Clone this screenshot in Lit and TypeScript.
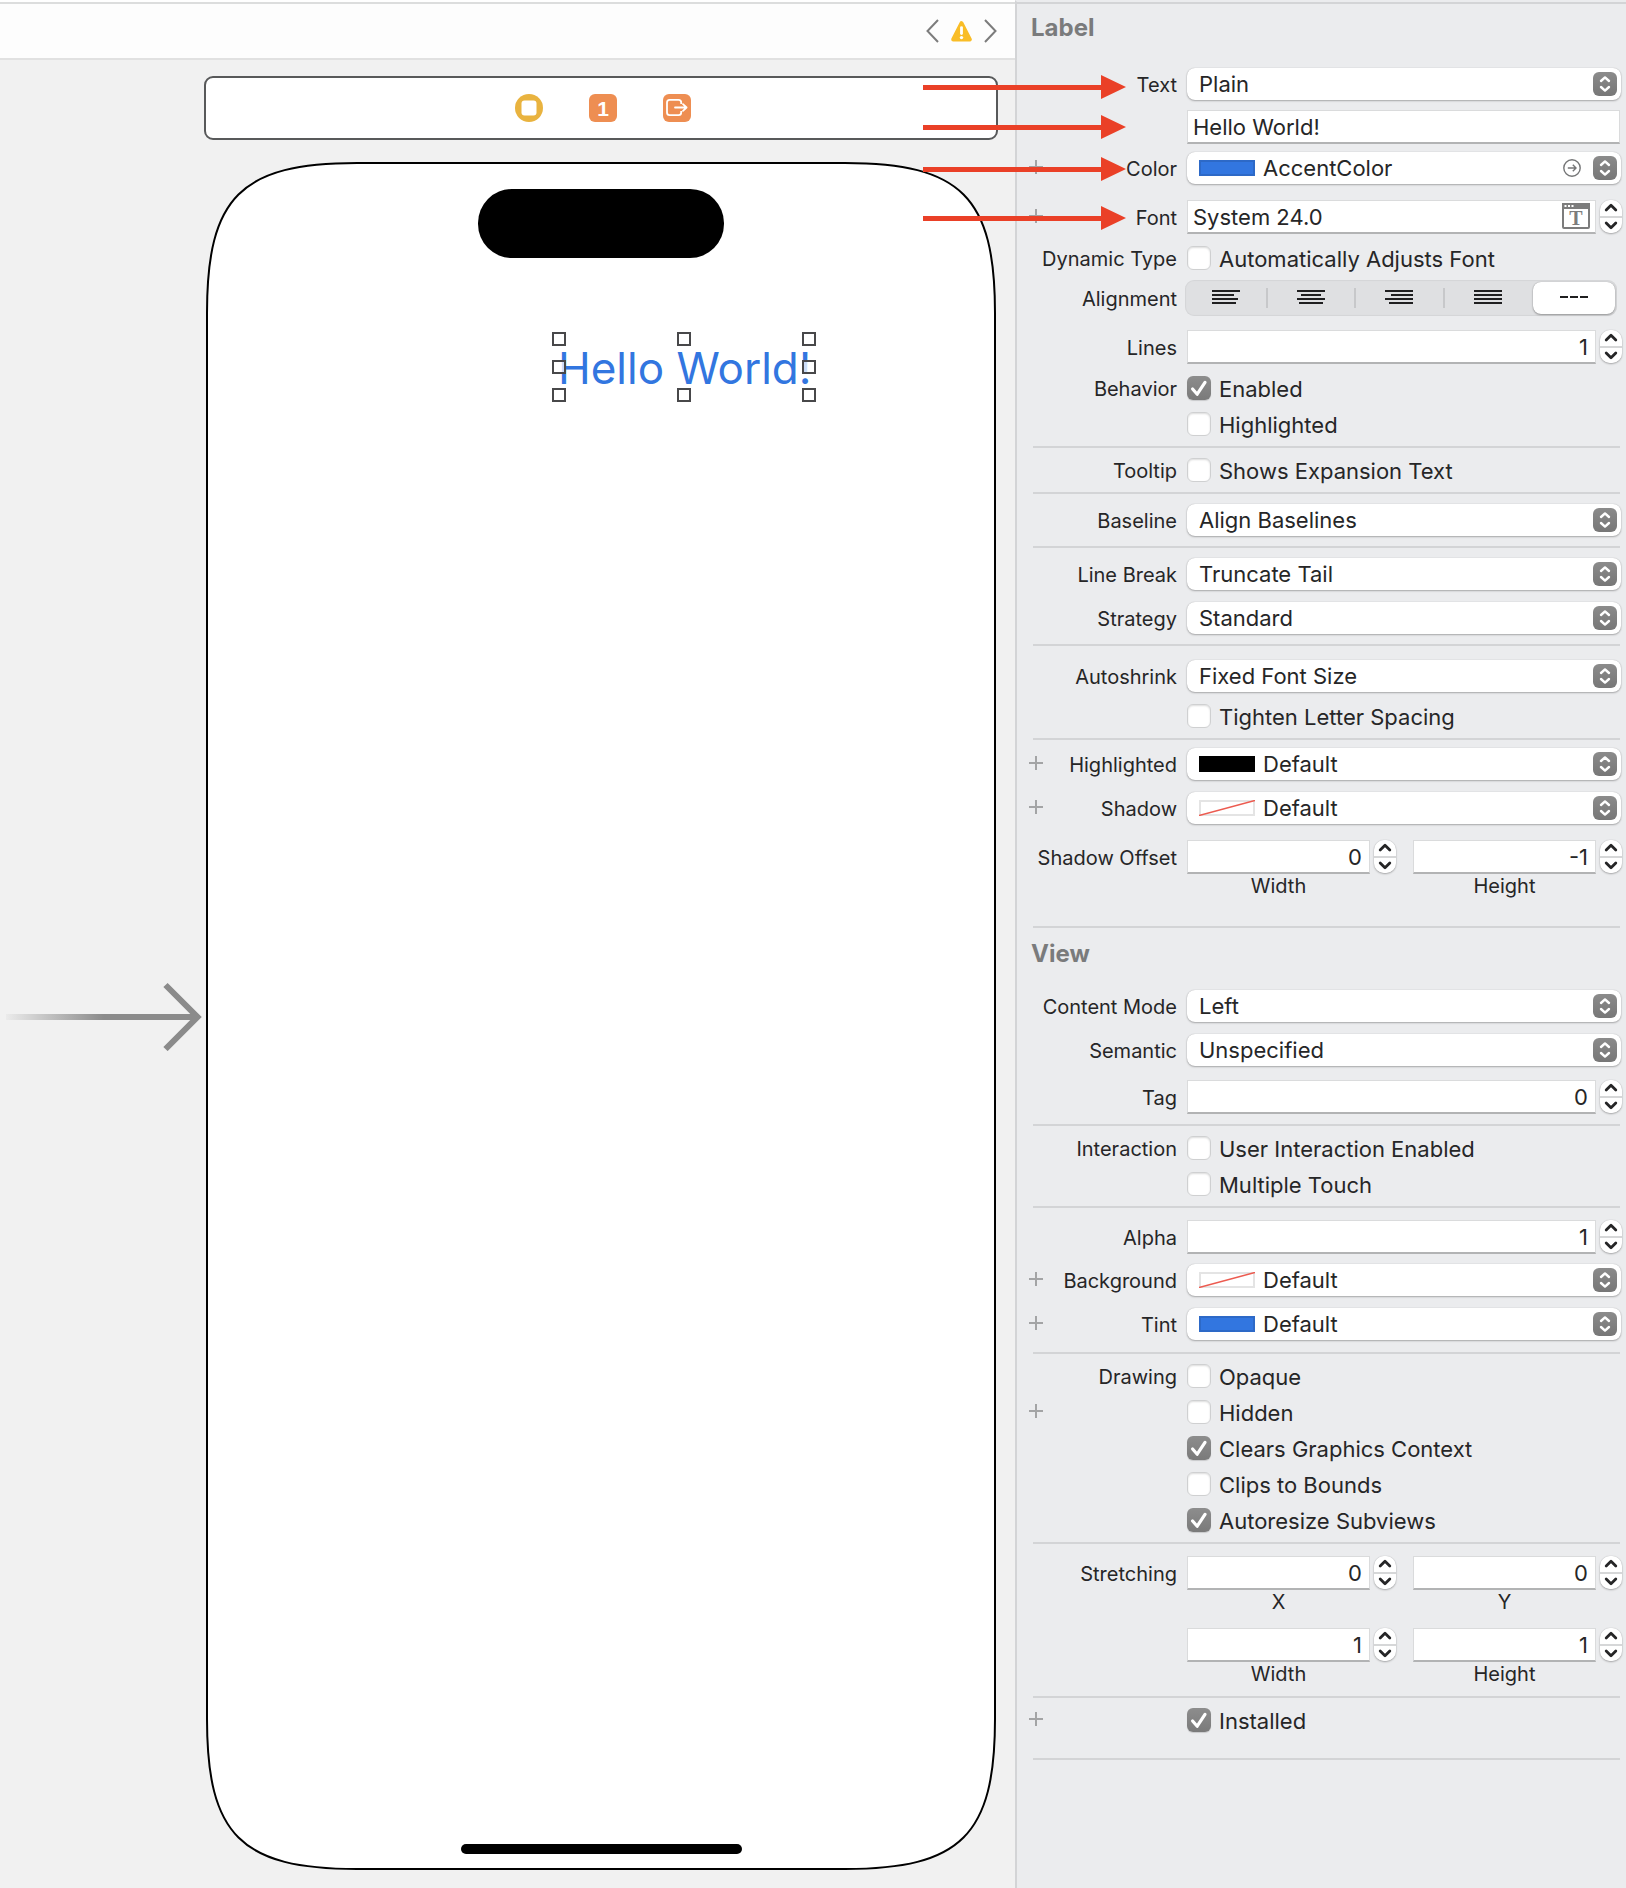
import { LitElement, html, css, svg, nothing, type TemplateResult } from "lit";
import { customElement } from "lit/decorators.js";
import { classMap } from "lit/directives/class-map.js";

type Gap = 8 | 10 | 12 | 14 | 16 | 20 | 24;

interface RowOptions {
  label?: string;
  forId?: string;
  plus?: boolean;
  gap?: Gap;
  top?: boolean;
}

const ALIGNMENTS: { name: string; lines: [number, number][] }[] = [
  { name: "Left", lines: [[0, 28], [0, 22], [0, 26], [0, 24]] },
  { name: "Center", lines: [[0, 28], [4, 20], [0, 28], [2, 24]] },
  { name: "Right", lines: [[0, 28], [6, 22], [0, 28], [4, 24]] },
  { name: "Justified", lines: [[0, 28], [0, 28], [0, 28], [0, 28]] },
];

/* A rectangle whose corners bend gradually: `reach` is where a bend starts, `pull` its control distance. */
function continuousRect(x0: number, y0: number, x1: number, y1: number, reach: number, pull: number): string {
  return [
    `M${x0 + reach} ${y0}H${x1 - reach}`,
    `C${x1 - pull} ${y0} ${x1} ${y0 + pull} ${x1} ${y0 + reach}`,
    `V${y1 - reach}`,
    `C${x1} ${y1 - pull} ${x1 - pull} ${y1} ${x1 - reach} ${y1}`,
    `H${x0 + reach}`,
    `C${x0 + pull} ${y1} ${x0} ${y1 - pull} ${x0} ${y1 - reach}`,
    `V${y0 + reach}`,
    `C${x0} ${y0 + pull} ${x0 + pull} ${y0} ${x0 + reach} ${y0}Z`,
  ].join("");
}

@customElement("app-root")
export class AppRoot extends LitElement {
  static styles = css`
    :host {
      display: block;
      min-height: 100vh;
      font-family: Inter, "Liberation Sans", sans-serif;
      color: #262627;
      background: #ebecee;
    }
    * {
      box-sizing: border-box;
    }
    .app {
      display: grid;
      grid-template-columns: minmax(0, 1fr) 611px;
      min-height: 100vh;
      position: relative;
    }

    .editor {
      display: flex;
      flex-direction: column;
      background: #f1f1f1;
      border-top: 2px solid #ffffff;
    }
    .jumpbar {
      display: flex;
      justify-content: flex-end;
      align-items: center;
      gap: 12px;
      height: 58px;
      padding: 0 18px 0 0;
      background: #fdfdfd;
      border-top: 2px solid #dcdddd;
      border-bottom: 2px solid #e1e1e1;
    }
    .icon-button {
      display: block;
      padding: 0;
      border: 0;
      background: none;
    }
    svg {
      display: block;
    }
    .canvas {
      display: grid;
      grid-template-columns: 204px minmax(0, 1fr);
      row-gap: 22px;
      padding: 16px 17px 18px 0;
    }
    .dock {
      grid-column: 2;
      display: flex;
      justify-content: center;
      align-items: center;
      gap: 46px;
      height: 64px;
      padding-left: 4px;
      border: 2px solid #58595a;
      border-radius: 9px;
      background: #ffffff;
    }
    .entry {
      grid-column: 1;
      align-self: center;
      padding-left: 6px;
    }
    .phone {
      grid-column: 2;
      position: relative;
      display: flex;
      flex-direction: column;
      align-items: center;
      margin: 0 2px;
      padding: 27px 0 16px;
      aspect-ratio: 790 / 1708;
    }
    .outline {
      position: absolute;
      inset: 0;
      width: 100%;
      height: 100%;
    }
    .island {
      position: relative;
      width: 246px;
      height: 69px;
      border-radius: 34px;
      background: #000000;
    }
    .home {
      position: relative;
      width: 281px;
      height: 10px;
      margin-top: auto;
      border-radius: 5px;
      background: #000000;
    }
    .selection {
      position: absolute;
      left: 346px;
      top: 170px;
      display: grid;
      grid-template-columns: repeat(3, auto);
      justify-content: space-between;
      align-content: space-between;
      width: 264px;
      height: 70px;
    }
    .selected-text {
      position: absolute;
      left: 6px;
      top: 8px;
      font-size: 44px;
      line-height: 56px;
      white-space: nowrap;
      color: #3276e0;
    }
    .handle {
      position: relative;
      width: 14px;
      height: 14px;
      border: 2px solid #48484a;
      background: rgba(255, 255, 255, 0.75);
    }
    .handle.blank {
      visibility: hidden;
    }

    .inspector {
      border-left: 2px solid #d3d4d6;
      border-top: 2px solid #ebecee;
    }
    .inspector-body {
      padding: 8px 4px 0 12px;
      border-top: 2px solid #d3d4d6;
    }
    .title {
      margin: 0 0 0 2px;
      font-size: 24px;
      line-height: 32px;
      font-weight: 700;
      color: #7a7b7c;
    }
    .rule {
      height: 2px;
      margin: 10px 2px 0 4px;
      border: 0;
      background: #d3d4d6;
    }
    .rule.far {
      margin-top: 26px;
    }
    .g8 { margin-top: 8px; }
    .g10 { margin-top: 10px; }
    .g12 { margin-top: 12px; }
    .g14 { margin-top: 14px; }
    .g16 { margin-top: 16px; }
    .g20 { margin-top: 20px; }
    .g24 { margin-top: 24px; }
    .row {
      display: grid;
      grid-template-columns: 148px minmax(0, 1fr);
      column-gap: 10px;
      align-items: center;
    }
    .row.top {
      align-items: start;
    }
    .name {
      display: flex;
      align-items: center;
      justify-content: flex-end;
      font-size: 20px;
      line-height: 22px;
      white-space: nowrap;
    }
    .name-text {
      padding-top: 2px;
    }
    .row.top .name {
      line-height: 32px;
    }
    .plus {
      margin-right: auto;
      margin-bottom: 2px;
    }

    .popup {
      position: relative;
      margin-right: 1px;
    }
    .popup select {
      display: block;
      width: 100%;
      height: 32px;
      padding: 0 40px 0 12px;
      border: 0;
      border-radius: 8px;
      appearance: none;
      background: #ffffff;
      box-shadow: 0 0 1px rgba(0, 0, 0, 0.25), 0 1px 2px rgba(0, 0, 0, 0.28);
      font: inherit;
      font-size: 22px;
      color: inherit;
    }
    .popup.has-swatch select {
      padding-left: 76px;
    }
    .popup-arrows {
      position: absolute;
      right: 4px;
      top: 4px;
      pointer-events: none;
    }
    .swatch {
      position: absolute;
      left: 12px;
      top: 8px;
      width: 56px;
      height: 16px;
      pointer-events: none;
    }
    .swatch.blue {
      background: #3276e0;
      border: 2px solid #2d69c7;
    }
    .swatch.black {
      background: #000000;
    }
    .goto {
      position: absolute;
      right: 40px;
      top: 7px;
    }

    .field {
      display: block;
      width: 100%;
      min-width: 0;
      height: 34px;
      padding: 0 7px 0 5px;
      border: 1px solid #dadbdc;
      border-bottom: 2px solid #b2b3b4;
      border-radius: 0;
      background: #ffffff;
      font: inherit;
      font-size: 22px;
      color: inherit;
    }
    .full {
      margin-right: 2px;
    }
    .field.number {
      text-align: right;
    }
    .with-stepper {
      position: relative;
      display: grid;
      grid-template-columns: minmax(0, 1fr) 22px;
      column-gap: 4px;
    }
    .font-picker {
      position: absolute;
      right: 32px;
      top: 3px;
    }
    .stepper {
      display: flex;
      flex-direction: column;
      gap: 2px;
      height: 33px;
      border-radius: 10px;
      overflow: hidden;
      background: #d6d7d8;
      box-shadow: 0 0 1px rgba(0, 0, 0, 0.25), 0 1px 2px rgba(0, 0, 0, 0.28);
    }
    .stepper button {
      flex: 1;
      display: flex;
      align-items: center;
      justify-content: center;
      padding: 0;
      border: 0;
      background: #ffffff;
    }
    .pair {
      display: grid;
      grid-template-columns: repeat(2, minmax(0, 1fr));
      column-gap: 17px;
    }
    .caption {
      display: block;
      padding: 0 26px 2px 0;
      text-align: center;
      font-size: 20px;
      line-height: 24px;
    }

    .check {
      display: flex;
      align-items: center;
      gap: 8px;
      height: 24px;
      font-size: 22px;
      line-height: 22px;
      white-space: nowrap;
    }
    .check-text {
      padding-top: 2px;
    }
    .box {
      position: relative;
      display: block;
      width: 24px;
      height: 24px;
    }
    .box input {
      display: block;
      width: 24px;
      height: 24px;
      margin: 0;
      appearance: none;
      border: 1px solid #cfd0d1;
      border-radius: 6px;
      background: #ffffff;
      box-shadow: inset 0 1px 2px rgba(0, 0, 0, 0.14);
    }
    .box input:checked {
      border: 0;
      background: linear-gradient(#8d8d8d, #7a7a7a);
      box-shadow: 0 1px 1px rgba(0, 0, 0, 0.15);
    }
    .tick {
      position: absolute;
      inset: 0;
      visibility: hidden;
      pointer-events: none;
    }
    .box input:checked + .tick {
      visibility: visible;
    }

    .segments {
      display: grid;
      grid-template-columns: 83fr 88fr 88fr 88fr 84fr;
      height: 36px;
      margin: 0 5px 0 -2px;
      border-radius: 9px;
      background: #dfe0e2;
      box-shadow: inset 0 0 1px 1px rgba(0, 0, 0, 0.05);
    }
    .segment {
      display: flex;
      align-items: center;
      justify-content: center;
      margin: 8px 0;
      padding: 0 0 2px;
      border: 0;
      border-right: 2px solid #c7c8ca;
      background: none;
    }
    .segment:nth-child(4) {
      border-right-color: transparent;
    }
    .segment.on {
      margin: 2px 2px 2px 0;
      border: 0;
      border-radius: 8px;
      background: #ffffff;
      box-shadow: 0 0 1px rgba(0, 0, 0, 0.35), 0 1px 2px rgba(0, 0, 0, 0.3);
    }

    .pointers {
      position: absolute;
      right: 500px;
      top: 75px;
      pointer-events: none;
    }
  `;

  private row(control: TemplateResult, options: RowOptions = {}) {
    const { label, forId, plus, gap = 12, top } = options;
    return html`<div class=${classMap({ row: true, top: !!top, [`g${gap}`]: true })}>
      <div class="name">
        ${plus
          ? html`<button class="icon-button plus" aria-label=${`Add variation ${label ?? ""}`}>
              <svg width="14" height="14" viewBox="0 0 14 14">
                <path d="M7 0V14M0 7H14" stroke="#a3a4a5" stroke-width="2" />
              </svg>
            </button>`
          : nothing}
        ${label
          ? forId
            ? html`<label class="name-text" for=${forId}>${label}</label>`
            : html`<span class="name-text">${label}</span>`
          : nothing}
      </div>
      ${control}
    </div>`;
  }

  private popup(label: string, value: string, options: RowOptions & { swatch?: "blue" | "black" | "none"; goto?: boolean } = {}) {
    const id = `popup-${label.toLowerCase().replace(/ /g, "-")}`;
    const { swatch } = options;
    return this.row(
      html`<div class=${classMap({ popup: true, "has-swatch": !!swatch })}>
        <select id=${id}>
          <option>${value}</option>
        </select>
        ${swatch === "none"
          ? html`<svg class="swatch" width="56" height="16" viewBox="0 0 56 16">
              <rect x="1" y="1" width="54" height="14" fill="#fff" stroke="#e4e4e4" stroke-width="2" />
              <path d="M0 15.6L56 0.4" stroke="#ec5b50" stroke-width="1.4" />
            </svg>`
          : swatch
            ? html`<span class="swatch ${swatch}"></span>`
            : nothing}
        ${options.goto
          ? html`<button class="icon-button goto" aria-label="Go to color">
              <svg width="18" height="18" viewBox="0 0 18 18" fill="none" stroke="#757677" stroke-width="1.4">
                <circle cx="9" cy="9" r="8.2" />
                <path d="M4.8 9H13M9.8 5.8L13 9L9.8 12.2" />
              </svg>
            </button>`
          : nothing}
        <svg class="popup-arrows" width="24" height="24" viewBox="0 0 24 24">
          <defs>
            <linearGradient id="arrows-fill" x1="0" y1="0" x2="0" y2="1">
              <stop offset="0" stop-color="#8b8b8b" />
              <stop offset="1" stop-color="#777777" />
            </linearGradient>
          </defs>
          <rect width="24" height="24" rx="6" fill="url(#arrows-fill)" />
          <path
            d="M8 9L12 5.4L16 9M8 15L12 18.6L16 15"
            fill="none"
            stroke="#fff"
            stroke-width="2.4"
            stroke-linecap="round"
            stroke-linejoin="round"
          />
        </svg>
      </div>`,
      { label, forId: id, ...options },
    );
  }

  private stepper(name: string) {
    const arrow = (d: string) => html`<svg width="14" height="9" viewBox="0 0 14 9">
      <path d=${d} fill="none" stroke="#262627" stroke-width="2.8" stroke-linecap="round" stroke-linejoin="round" />
    </svg>`;
    return html`<div class="stepper">
      <button aria-label=${`Increase ${name}`}>${arrow("M2.2 7L7 2.2L11.8 7")}</button>
      <button aria-label=${`Decrease ${name}`}>${arrow("M2.2 2L7 6.8L11.8 2")}</button>
    </div>`;
  }

  private numberInput(id: string, value: string, name: string) {
    return html`<div class="with-stepper">
      <input class="field number" id=${id} type="text" inputmode="numeric" .value=${value} />
      ${this.stepper(name)}
    </div>`;
  }

  private numberRow(label: string, value: string, gap: Gap) {
    const id = `number-${label.toLowerCase()}`;
    return this.row(this.numberInput(id, value, label), { label, forId: id, gap });
  }

  private pairRow(label: string | undefined, prefix: string, items: [string, string][], gap: Gap) {
    return this.row(
      html`<div class="pair">
        ${items.map(
          ([caption, value]) => html`<div>
            ${this.numberInput(`${prefix}-${caption}`, value, caption)}
            <label class="caption" for=${`${prefix}-${caption}`}>${caption}</label>
          </div>`,
        )}
      </div>`,
      { label, gap, top: true },
    );
  }

  private check(text: string, checked = false, options: RowOptions = {}) {
    return this.row(
      html`<label class="check">
        <span class="box">
          <input type="checkbox" .checked=${checked} />
          <svg class="tick" width="24" height="24" viewBox="0 0 24 24">
            <path
              d="M5.6 13L10.2 18.2L18 6.4"
              fill="none"
              stroke="#fff"
              stroke-width="3.2"
              stroke-linecap="round"
              stroke-linejoin="round"
            />
          </svg>
        </span>
        <span class="check-text">${text}</span>
      </label>`,
      options,
    );
  }

  private segments() {
    return this.row(
      html`<div class="segments" role="group" aria-label="Alignment">
        ${ALIGNMENTS.map(
          ({ name, lines }) => html`<button class="segment" aria-label=${name} aria-pressed="false">
            <svg width="28" height="14" viewBox="0 0 28 14">
              ${lines.map(([x, w], i) => svg`<rect x=${x} y=${i * 4} width=${w} height="2" fill="#1f1f20" />`)}
            </svg>
          </button>`,
        )}
        <button class="segment on" aria-label="Natural" aria-pressed="true">
          <svg width="28" height="2" viewBox="0 0 28 2">
            <path d="M0 1H8M10 1H18M20 1H28" stroke="#1f1f20" stroke-width="2" />
          </svg>
        </button>
      </div>`,
      { label: "Alignment", gap: 10 },
    );
  }

  private editor() {
    return html`<main class="editor">
      <nav class="jumpbar" aria-label="Issues">
        <button class="icon-button" aria-label="Previous issue">
          <svg width="13" height="24" viewBox="0 0 13 24">
            <path d="M12 1L1.5 12L12 23" fill="none" stroke="#7c7c7c" stroke-width="2" />
          </svg>
        </button>
        <button class="icon-button" aria-label="Warning">
          <svg width="21" height="21" viewBox="0 0 21 21">
            <path
              d="M10.5 2.2L18.8 18.4H2.2Z"
              fill="#f9bd27"
              stroke="#f9bd27"
              stroke-width="4"
              stroke-linejoin="round"
            />
            <path d="M10.5 6.6V12.6" stroke="#fff" stroke-width="2.8" stroke-linecap="round" />
            <circle cx="10.5" cy="16.6" r="1.7" fill="#fff" />
          </svg>
        </button>
        <button class="icon-button" aria-label="Next issue">
          <svg width="13" height="24" viewBox="0 0 13 24">
            <path d="M1 1L11.5 12L1 23" fill="none" stroke="#7c7c7c" stroke-width="2" />
          </svg>
        </button>
      </nav>
      <div class="canvas">
        <div class="dock">
          <button class="icon-button" aria-label="View Controller">
            <svg width="28" height="28" viewBox="0 0 28 28">
              <circle cx="14" cy="14" r="14" fill="#e9b33f" />
              <rect x="6.5" y="6.5" width="15" height="15" rx="3" fill="#fff" />
            </svg>
          </button>
          <button class="icon-button" aria-label="First Responder">
            <svg width="28" height="28" viewBox="0 0 28 28">
              <rect width="28" height="28" rx="6" fill="#ee8e52" />
              <text x="14" y="21.5" text-anchor="middle" font-size="21" font-weight="600" fill="#fff">1</text>
            </svg>
          </button>
          <button class="icon-button" aria-label="Exit">
            <svg width="28" height="28" viewBox="0 0 28 28" fill="none" stroke="#fff" stroke-width="1.8">
              <rect width="28" height="28" rx="6" fill="#ee8e52" stroke="none" />
              <path
                d="M18.2 10V8.4Q18.2 5.8 15.6 5.8H6.6Q4 5.8 4 8.4V18.6Q4 21.2 6.6 21.2H15.6Q18.2 21.2 18.2 18.6V17"
              />
              <path d="M12 13.5H23.5M20 10.2L23.6 13.5L20 16.8" stroke-linecap="round" stroke-linejoin="round" />
            </svg>
          </button>
        </div>
        <div class="entry">
          <svg width="196" height="70" viewBox="0 0 196 70">
            <defs>
              <linearGradient id="entry-fade" x1="0" y1="0" x2="1" y2="0">
                <stop offset="0" stop-color="#ebebeb" />
                <stop offset="0.52" stop-color="#8b8b8b" />
              </linearGradient>
            </defs>
            <rect y="33" width="188" height="6" fill="url(#entry-fade)" />
            <path d="M159.5 4L191.5 36L159.5 68" fill="none" stroke="#8b8b8b" stroke-width="6" />
          </svg>
        </div>
        <div class="phone">
          <svg class="outline" viewBox="0 0 790 1708" preserveAspectRatio="none">
            <path d=${continuousRect(1, 1, 789, 1707, 150, 34)} fill="#fff" stroke="#000" stroke-width="2" />
          </svg>
          <div class="island"></div>
          <div class="selection">
            <span class="selected-text">Hello World!</span>
            ${[0, 1, 2, 3, 4, 5, 6, 7, 8].map(
              (i) => html`<span class=${classMap({ handle: true, blank: i === 4 })}></span>`,
            )}
          </div>
          <div class="home"></div>
        </div>
      </div>
    </main>`;
  }

  private inspector() {
    return html`<aside class="inspector">
      <div class="inspector-body">
        <h2 class="title">Label</h2>
        ${this.popup("Text", "Plain", { gap: 24 })}
        ${this.row(
          html`<div class="full"><input class="field" type="text" aria-label="Label text" .value=${"Hello World!"} /></div>`,
          { gap: 10 },
        )}
        ${this.popup("Color", "AccentColor", { gap: 8, plus: true, swatch: "blue", goto: true })}
        ${this.row(
          html`<div class="with-stepper">
            <input class="field" id="font" type="text" .value=${"System 24.0"} />
            <button class="icon-button font-picker" aria-label="Choose font">
              <svg width="28" height="26" viewBox="0 0 28 26">
                <rect x="1" y="1" width="26" height="24" rx="1" fill="#fff" stroke="#7c7c7c" stroke-width="2" />
                <rect width="28" height="6" fill="#7c7c7c" />
                <path d="M2.5 3H4.5M6 3H8M9.5 3H11.5" stroke="#fff" stroke-width="2" />
                <text
                  x="14"
                  y="22"
                  text-anchor="middle"
                  font-family="Liberation Serif, serif"
                  font-size="20"
                  font-weight="700"
                  fill="#7c7c7c"
                >T</text>
              </svg>
            </button>
            ${this.stepper("font size")}
          </div>`,
          { label: "Font", forId: "font", gap: 16, plus: true },
        )}
        ${this.check("Automatically Adjusts Font", false, { label: "Dynamic Type" })}
        ${this.segments()}
        ${this.numberRow("Lines", "1", 14)}
        ${this.check("Enabled", true, { label: "Behavior" })}
        ${this.check("Highlighted")}
        <hr class="rule" />
        ${this.check("Shows Expansion Text", false, { label: "Tooltip", gap: 10 })}
        <hr class="rule" />
        ${this.popup("Baseline", "Align Baselines", { gap: 10 })}
        <hr class="rule" />
        ${this.popup("Line Break", "Truncate Tail", { gap: 10 })}
        ${this.popup("Strategy", "Standard")}
        <hr class="rule" />
        ${this.popup("Autoshrink", "Fixed Font Size", { gap: 14 })}
        ${this.check("Tighten Letter Spacing")}
        <hr class="rule" />
        ${this.popup("Highlighted", "Default", { gap: 8, plus: true, swatch: "black" })}
        ${this.popup("Shadow", "Default", { plus: true, swatch: "none" })}
        ${this.pairRow("Shadow Offset", "offset", [["Width", "0"], ["Height", "-1"]], 16)}
        <hr class="rule far" />
        <h2 class="title g10">View</h2>
        ${this.popup("Content Mode", "Left", { gap: 20 })}
        ${this.popup("Semantic", "Unspecified")}
        ${this.numberRow("Tag", "0", 14)}
        <hr class="rule" />
        ${this.check("User Interaction Enabled", false, { label: "Interaction", gap: 10 })}
        ${this.check("Multiple Touch")}
        <hr class="rule" />
        ${this.numberRow("Alpha", "1", 12)}
        ${this.popup("Background", "Default", { gap: 10, plus: true, swatch: "none" })}
        ${this.popup("Tint", "Default", { plus: true, swatch: "blue" })}
        <hr class="rule g12" />
        ${this.check("Opaque", false, { label: "Drawing", gap: 10 })}
        ${this.check("Hidden", false, { plus: true })}
        ${this.check("Clears Graphics Context", true)}
        ${this.check("Clips to Bounds")}
        ${this.check("Autoresize Subviews", true)}
        <hr class="rule" />
        ${this.pairRow("Stretching", "stretch-origin", [["X", "0"], ["Y", "0"]], 12)}
        ${this.pairRow(undefined, "stretch-size", [["Width", "1"], ["Height", "1"]], 12)}
        <hr class="rule g8" />
        ${this.check("Installed", true, { plus: true, gap: 10 })}
        <hr class="rule far" />
      </div>
    </aside>`;
  }

  render() {
    return html`<div class="app">
      ${this.editor()} ${this.inspector()}
      <svg class="pointers" width="203" height="168" viewBox="0 0 203 168" fill="#ea4027" aria-hidden="true">
        ${[12, 52, 94, 143].map(
          (y) => svg`<path d=${`M0 ${y - 2}H178V${y - 12}L203 ${y}L178 ${y + 12}V${y + 3}H0Z`} />`,
        )}
      </svg>
    </div>`;
  }
}
